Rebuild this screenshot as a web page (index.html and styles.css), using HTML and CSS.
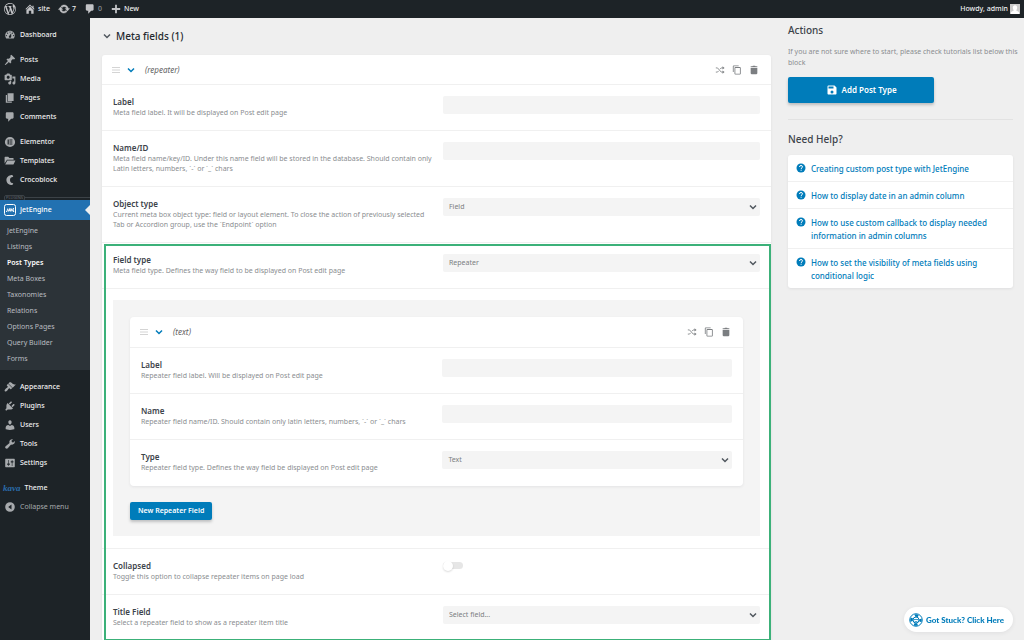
FILE: index.html
```html
<!DOCTYPE html>
<html lang="en">
<head>
<meta charset="utf-8">
<title>Edit Post Type</title>
<link rel="stylesheet" href="styles.css">
</head>
<body>
<svg class="sprite" aria-hidden="true">
  <symbol id="wp" viewBox="0 0 20 20"><path d="M20 10c0-5.51-4.49-10-10-10C4.48 0 0 4.49 0 10c0 5.52 4.48 10 10 10 5.51 0 10-4.48 10-10zM7.78 15.37L4.37 6.22c.55-.02 1.17-.08 1.17-.08.5-.06.44-1.13-.06-1.11 0 0-1.45.11-2.37.11-.18 0-.37 0-.58-.01C4.12 2.69 6.87 1.11 10 1.11c2.33 0 4.45.87 6.05 2.34-.68-.11-1.65.39-1.65 1.58 0 .74.45 1.36.9 2.1.35.61.55 1.36.55 2.46 0 1.49-1.4 5-1.4 5l-3.03-8.37c.54-.02.82-.17.82-.17.5-.05.44-1.25-.06-1.22 0 0-1.44.12-2.38.12-.87 0-2.33-.12-2.33-.12-.5-.03-.56 1.2-.06 1.22l.92.08 1.26 3.41zM17.41 10c.24-.64.74-1.87.43-4.25.7 1.29 1.05 2.71 1.05 4.25 0 3.29-1.73 6.24-4.4 7.78.97-2.59 1.94-5.2 2.92-7.78zM6.1 18.09C3.12 16.65 1.11 13.53 1.11 10c0-1.3.23-2.48.72-3.59C3.25 10.3 4.67 14.2 6.1 18.09zm4.03-6.63l2.58 6.98c-.86.29-1.76.45-2.71.45-.79 0-1.57-.11-2.29-.33.81-2.38 1.62-4.74 2.42-7.1z"/></symbol>
  <symbol id="home" viewBox="0 0 20 20"><path d="M16 8.5l1.53 1.53-1.06 1.06L10 4.6l-6.47 6.49-1.06-1.06L10 2.5l4 4v-2h2v4zm-6-2.46l6 5.99V18h-4v-5H8v5H4v-5.97z"/></symbol>
  <symbol id="update" viewBox="0 0 20 20"><path stroke="currentColor" stroke-width=".8" d="M10.2 3.28c3.53 0 6.43 2.61 6.92 6h2.08l-3.5 4-3.5-4h2.32c-.45-1.97-2.21-3.45-4.32-3.45-1.45 0-2.73.71-3.54 1.78L4.95 5.66C6.23 4.2 8.11 3.28 10.2 3.28zm-.4 13.44c-3.52 0-6.43-2.61-6.92-6H.8l3.5-4c1.17 1.33 2.33 2.67 3.5 4H5.48c.45 1.97 2.21 3.45 4.32 3.45 1.45 0 2.73-.71 3.54-1.78l1.71 1.95c-1.28 1.46-3.15 2.38-5.25 2.38z"/></symbol>
  <symbol id="plus" viewBox="0 0 20 20"><path d="M17 8.500v3h-5.500v5.500h-3v-5.500H3v-3h5.500V3h3v5.500z"/></symbol>
  <symbol id="dashboard" viewBox="0 0 20 20"><path fill-rule="evenodd" d="M3.76 16h12.48c1.1-1.37 1.76-3.11 1.76-5 0-4.42-3.58-8-8-8s-8 3.58-8 8c0 1.89.66 3.63 1.76 5zM10 4c.55 0 1 .45 1 1s-.45 1-1 1-1-.45-1-1 .45-1 1-1zM6 6c.55 0 1 .45 1 1s-.45 1-1 1-1-.45-1-1 .45-1 1-1zm8 0c.55 0 1 .45 1 1s-.45 1-1 1-1-.45-1-1 .45-1 1-1zm-5.37 5.550L12 7v6c0 1.100-.9 2-2 2s-2-.9-2-2c0-.57.24-1.080.63-1.450zM4 10c.55 0 1 .45 1 1s-.45 1-1 1-1-.45-1-1 .45-1 1-1zm12 0c.55 0 1 .45 1 1s-.45 1-1 1-1-.45-1-1 .45-1 1-1z"/></symbol>
  <symbol id="pin" viewBox="0 0 20 20"><path d="M10.44 3.02l1.82-1.82 6.36 6.35-1.83 1.82c-1.05-.68-2.48-.57-3.41.36l-.75.75c-.92.93-1.04 2.35-.35 3.41l-1.83 1.82-2.41-2.41-2.8 2.79c-.42.42-3.38 2.71-3.8 2.29s1.86-3.39 2.28-3.81l2.79-2.79L4.1 9.36l1.83-1.82c1.05.69 2.48.57 3.4-.36l.75-.75c.93-.92 1.05-2.35.36-3.41z"/></symbol>
  <symbol id="media" viewBox="0 0 20 20"><path d="M13 11V4c0-.55-.45-1-1-1h-1.670L9 1H5L3.670 3H2c-.55 0-1 .45-1 1v7c0 .55.45 1 1 1h10c.55 0 1-.45 1-1zM7 4.500c1.380 0 2.500 1.120 2.500 2.500S8.380 9.500 7 9.500 4.500 8.380 4.500 7 5.620 4.500 7 4.500zM14 6h5v10.500c0 1.380-1.120 2.500-2.500 2.500S14 17.880 14 16.500s1.120-2.500 2.500-2.500c.17 0 .34.02.5.05V9h-3V6zm-4 8.050V13h2v3.500c0 1.380-1.120 2.500-2.500 2.500S7 17.880 7 16.500 8.120 14 9.500 14c.17 0 .34.02.5.05z"/></symbol>
  <symbol id="page" viewBox="0 0 20 20"><path d="M6 15V2h10v13H6zm-1 1h8v2H3V5h2v11z"/></symbol>
  <symbol id="comment" viewBox="0 0 20 20"><path d="M5 2h9c1.100 0 2 .9 2 2v7c0 1.100-.9 2-2 2h-2l-5 5v-5H5c-1.100 0-2-.9-2-2V4c0-1.100.9-2 2-2z"/></symbol>
  <symbol id="elementor" viewBox="0 0 20 20"><path fill-rule="evenodd" d="M10 1.500a8.500 8.500 0 1 0 0 17 8.500 8.500 0 0 0 0-17zM6 6h2v8H6zM9 6h5v1.700H9zM9 9.150h5v1.700H9zM9 12.300h5V14H9z"/></symbol>
  <symbol id="folder" viewBox="0 0 20 20"><path d="M1 4q0-1 1-1h5l2 2h6q1 0 1 1v2H5L1 14zM5.500 9H19l-3 6.500q-.4.500-1 .500H2z"/></symbol>
  <symbol id="croco" viewBox="0 0 20 20"><path d="M14 1.500C8 1.500 4 5 4 10s4 8.500 10 8.500l1.500-3C11.500 15 10 13 10 10s1.500-5 5.500-5.500z"/></symbol>
  <symbol id="brush" viewBox="0 0 20 20"><path d="M14.480 11.060L7.410 3.990l1.500-1.500c.5-.56 2.300-.47 3.510.32 1.210.8 1.430 1.280 2.910 2.100 1.180.64 2.450 1.260 4.450.85zm-.71.71L6.700 4.700 4.930 6.470c-.39.39-.39 1.020 0 1.410l1.060 1.060c.39.39.39 1.030 0 1.420-.6.6-1.430 1.110-2.210 1.690-.35.26-.7.53-1.010.84C1.430 14.230.4 16.080 1.400 17.070c.99 1 2.840-.03 4.180-1.360.31-.31.58-.66.85-1.020.57-.78 1.080-1.610 1.690-2.210.39-.39 1.020-.39 1.410 0l1.060 1.060c.39.39 1.020.39 1.410 0z"/></symbol>
  <symbol id="plug" viewBox="0 0 20 20"><path d="M13.110 4.360L9.870 7.600 8 5.730l3.240-3.240c.35-.34 1.050-.2 1.560.32.52.51.66 1.210.31 1.550zm-8 1.770l.91-1.120 9.010 9.010-1.190.84c-.71.71-2.630 1.160-3.820 1.160H6.140L4.900 17.260c-.59.59-1.540.59-2.120 0-.59-.58-.59-1.530 0-2.120l1.240-1.240v-3.880c0-1.130.4-3.190 1.090-3.890zm7.260 3.970l3.240-3.240c.34-.35 1.040-.21 1.550.31.52.51.66 1.210.31 1.550l-3.240 3.250z"/></symbol>
  <symbol id="user" viewBox="0 0 20 20"><path d="M10 9.250c-2.270 0-2.730-3.440-2.730-3.440C7 4.020 7.820 2 9.970 2c2.160 0 2.980 2.020 2.710 3.810 0 0-.41 3.440-2.680 3.440zm0 2.570L12.720 10c2.390 0 4.520 2.330 4.520 4.530v2.490s-3.650 1.130-7.240 1.130c-3.650 0-7.240-1.130-7.240-1.130v-2.490c0-2.250 1.940-4.480 4.470-4.480z"/></symbol>
  <symbol id="wrench" viewBox="0 0 20 20"><path d="M16.680 9.770c-1.340 1.340-3.300 1.670-4.950.99l-5.410 6.520c-.99.99-2.590.99-3.580 0s-.99-2.590 0-3.570l6.520-5.420c-.68-1.650-.35-3.610.99-4.950 1.280-1.280 3.120-1.620 4.720-1.060l-2.890 2.890 2.820 2.820 2.860-2.870c.53 1.580.18 3.390-1.080 4.650z"/></symbol>
  <symbol id="sliders" viewBox="0 0 20 20"><path d="M18 16V4c0-.55-.45-1-1-1H3c-.55 0-1 .45-1 1v12c0 .55.45 1 1 1h14c.55 0 1-.45 1-1zM8 11h1c.55 0 1 .45 1 1s-.45 1-1 1H8v1.500c0 .28-.22.5-.5.5s-.5-.22-.5-.5V13H6c-.55 0-1-.45-1-1s.45-1 1-1h1V5.500c0-.28.22-.5.5-.5s.5.22.5.5V11zm5-2h-1c-.55 0-1-.45-1-1s.45-1 1-1h1V5.500c0-.28.22-.5.5-.5s.5.22.5.5V7h1c.55 0 1 .45 1 1s-.45 1-1 1h-1v5.500c0 .28-.22.5-.5.5s-.5-.22-.5-.5V9z"/></symbol>
  <symbol id="collapse" viewBox="0 0 20 20"><path fill-rule="evenodd" d="M10 2a8 8 0 1 0 0 16 8 8 0 0 0 0-16zM12.500 6v8L7 10z"/></symbol>
  <symbol id="chevron" viewBox="0 0 10 10"><path d="M2 3.500l3 3 3-3" fill="none" stroke="currentColor" stroke-width="1.500"/></symbol>
  <symbol id="drag" viewBox="0 0 10 10"><path d="M1 2.500h8M1 5h8M1 7.500h8" fill="none" stroke="currentColor"/></symbol>
  <symbol id="shuffle" viewBox="0 0 12 12"><path d="M1 3.500h2l4.500 5h2M1 8.500h2l1.400-1.500M6 5l1.500-1.500h2" fill="none" stroke="currentColor"/><path d="M9 1.500l2.500 2L9 5.500zM9 6.500l2.500 2-2.500 2z"/></symbol>
  <symbol id="copy" viewBox="0 0 24 24"><path d="M16 1H4c-1.100 0-2 .9-2 2v14h2V3h12zm3 4H8c-1.100 0-2 .9-2 2v14c0 1.100.9 2 2 2h11c1.100 0 2-.9 2-2V7c0-1.100-.9-2-2-2zm0 16H8V7h11z"/></symbol>
  <symbol id="trash" viewBox="0 0 24 24"><path d="M4 7h16v13q0 2-2 2H6q-2 0-2-2zM4 3h4l1.500-1.500h5L16 3h4v2.500H4z"/></symbol>
  <symbol id="save" viewBox="0 0 24 24"><path fill-rule="evenodd" d="M17 3H5a2 2 0 0 0-2 2v14c0 1.100.9 2 2 2h14c1.100 0 2-.9 2-2V7zm-5 16a3 3 0 1 1 0-6 3 3 0 0 1 0 6zm3-10H5V5h10z"/></symbol>
  <symbol id="help" viewBox="0 0 20 20"><circle cx="10" cy="10" r="9"/><path d="M7 8q0-3 3-3t3 2.700c0 2-2.800 2-2.800 4.200M10.200 13.500v2" fill="none" stroke="#fff" stroke-width="2"/></symbol>
</svg>

<header class="bar">
  <a class="bar-item" href="#" aria-label="About WordPress"><svg class="ico"><use href="#wp"/></svg></a>
  <a class="bar-item" href="#"><svg class="ico"><use href="#home"/></svg>site</a>
  <a class="bar-item" href="#"><svg class="ico"><use href="#update"/></svg>7</a>
  <a class="bar-item bar-item-muted" href="#"><svg class="ico"><use href="#comment"/></svg>0</a>
  <a class="bar-item" href="#"><svg class="ico"><use href="#plus"/></svg>New</a>
  <a class="bar-item bar-user" href="#">Howdy, admin <svg class="avatar" viewBox="0 0 10 10"><path fill="#ccc" d="M0 0h10v10H0z"/><path fill="#fff" d="M5 1.200c1.500 0 2.200 1 2.200 2.400S6.300 6.400 6.200 6.600L9 8v2H1V8l2.800-1.400C3.700 6.400 2.800 5 2.800 3.600S3.500 1.200 5 1.200z"/></svg></a>
</header>

<div class="layout">
  <nav class="side" aria-label="Admin menu">
    <ul class="menu">
      <li><a class="item" href="#"><svg class="ico"><use href="#dashboard"/></svg>Dashboard</a></li>
    </ul>
    <ul class="menu">
      <li><a class="item" href="#"><svg class="ico"><use href="#pin"/></svg>Posts</a></li>
      <li><a class="item" href="#"><svg class="ico"><use href="#media"/></svg>Media</a></li>
      <li><a class="item" href="#"><svg class="ico"><use href="#page"/></svg>Pages</a></li>
      <li><a class="item" href="#"><svg class="ico"><use href="#comment"/></svg>Comments</a></li>
    </ul>
    <ul class="menu">
      <li><a class="item" href="#"><svg class="ico"><use href="#elementor"/></svg>Elementor</a></li>
      <li><a class="item" href="#"><svg class="ico"><use href="#folder"/></svg>Templates</a></li>
      <li><a class="item" href="#"><svg class="ico"><use href="#croco"/></svg>Crocoblock</a></li>
    </ul>
    <div class="divider"><span class="divider-label">PLUGINS</span></div>
    <a class="item item-active" href="#"><svg class="ico" viewBox="0 0 12 12"><rect x=".5" y=".5" width="11" height="11" rx="2" fill="none" stroke="currentColor"/><path d="M2 7.500h1l.7-3M4.500 7.500l1.200-3 .5 3M7 7.500v-3l1 1.500M10 4.500H9v3h1.200M4 6.200h6" fill="none" stroke="currentColor" stroke-width=".9"/></svg>JetEngine</a>
    <ul class="submenu">
      <li><a class="sub" href="#">JetEngine</a></li>
      <li><a class="sub" href="#">Listings</a></li>
      <li><a class="sub sub-current" href="#">Post Types</a></li>
      <li><a class="sub" href="#">Meta Boxes</a></li>
      <li><a class="sub" href="#">Taxonomies</a></li>
      <li><a class="sub" href="#">Relations</a></li>
      <li><a class="sub" href="#">Options Pages</a></li>
      <li><a class="sub" href="#">Query Builder</a></li>
      <li><a class="sub" href="#">Forms</a></li>
    </ul>
    <ul class="menu">
      <li><a class="item" href="#"><svg class="ico"><use href="#brush"/></svg>Appearance</a></li>
      <li><a class="item" href="#"><svg class="ico"><use href="#plug"/></svg>Plugins</a></li>
      <li><a class="item" href="#"><svg class="ico"><use href="#user"/></svg>Users</a></li>
      <li><a class="item" href="#"><svg class="ico"><use href="#wrench"/></svg>Tools</a></li>
      <li><a class="item" href="#"><svg class="ico"><use href="#sliders"/></svg>Settings</a></li>
    </ul>
    <ul class="menu">
      <li><a class="item item-theme" href="#"><span class="kava">kava</span>Theme</a></li>
      <li><button class="item item-muted" type="button"><svg class="ico"><use href="#collapse"/></svg>Collapse menu</button></li>
    </ul>
  </nav>

  <main class="main">
    <h2 class="title"><svg class="chev"><use href="#chevron"/></svg>Meta fields (1)</h2>
    <div class="card">
      <div class="card-head">
        <svg class="chev drag"><use href="#drag"/></svg><svg class="chev chev-blue"><use href="#chevron"/></svg>
        <em class="card-name">(repeater)</em>
        <button class="tool" type="button" aria-label="Shuffle"><svg class="tool-ico"><use href="#shuffle"/></svg></button>
        <button class="tool" type="button" aria-label="Duplicate"><svg class="tool-ico"><use href="#copy"/></svg></button>
        <button class="tool" type="button" aria-label="Delete"><svg class="tool-ico"><use href="#trash"/></svg></button>
      </div>
      <div class="row">
        <div class="info"><label class="label" for="f-label">Label</label><p class="desc">Meta field label. It will be displayed on Post edit page</p></div>
        <input class="control" id="f-label" type="text">
      </div>
      <div class="row">
        <div class="info"><label class="label" for="f-name">Name/ID</label><p class="desc">Meta field name/key/ID. Under this name field will be stored in the database. Should contain only Latin letters, numbers, `-` or `_` chars</p></div>
        <input class="control" id="f-name" type="text">
      </div>
      <div class="row">
        <div class="info"><label class="label" for="f-object">Object type</label><p class="desc">Current meta box object type: field or layout element. To close the action of previously selected Tab or Accordion group, use the `Endpoint` option</p></div>
        <div class="select"><select class="control" id="f-object"><option>Field</option></select><svg class="chev"><use href="#chevron"/></svg></div>
      </div>
      <section class="marked">
        <div class="row">
          <div class="info"><label class="label" for="f-type">Field type</label><p class="desc">Meta field type. Defines the way field to be displayed on Post edit page</p></div>
          <div class="select"><select class="control" id="f-type"><option>Repeater</option></select><svg class="chev"><use href="#chevron"/></svg></div>
        </div>
        <div class="row row-wide">
          <div class="nest">
            <div class="card card-nested">
              <div class="card-head">
                <svg class="chev drag"><use href="#drag"/></svg><svg class="chev chev-blue"><use href="#chevron"/></svg>
                <em class="card-name">(text)</em>
                <button class="tool" type="button" aria-label="Shuffle"><svg class="tool-ico"><use href="#shuffle"/></svg></button>
                <button class="tool" type="button" aria-label="Duplicate"><svg class="tool-ico"><use href="#copy"/></svg></button>
                <button class="tool" type="button" aria-label="Delete"><svg class="tool-ico"><use href="#trash"/></svg></button>
              </div>
              <div class="row">
                <div class="info"><label class="label" for="r-label">Label</label><p class="desc">Repeater field label. Will be displayed on Post edit page</p></div>
                <input class="control" id="r-label" type="text">
              </div>
              <div class="row">
                <div class="info"><label class="label" for="r-name">Name</label><p class="desc">Repeater field name/ID. Should contain only latin letters, numbers, `-` or `_` chars</p></div>
                <input class="control" id="r-name" type="text">
              </div>
              <div class="row">
                <div class="info"><label class="label" for="r-type">Type</label><p class="desc">Repeater field type. Defines the way field be displayed on Post edit page</p></div>
                <div class="select"><select class="control" id="r-type"><option>Text</option></select><svg class="chev"><use href="#chevron"/></svg></div>
              </div>
            </div>
            <button class="btn" type="button">New Repeater Field</button>
          </div>
        </div>
        <div class="row">
          <div class="info"><label class="label" for="f-collapsed">Collapsed</label><p class="desc">Toggle this option to collapse repeater items on page load</p></div>
          <input class="switch" id="f-collapsed" type="checkbox" role="switch">
        </div>
        <div class="row">
          <div class="info"><label class="label" for="f-title">Title Field</label><p class="desc">Select a repeater field to show as a repeater item title</p></div>
          <div class="select"><select class="control" id="f-title"><option>Select field...</option></select><svg class="chev"><use href="#chevron"/></svg></div>
        </div>
      </section>
    </div>
  </main>

  <aside class="aside">
    <h2 class="heading">Actions</h2>
    <p class="note">If you are not sure where to start, please check tutorials list below this block</p>
    <button class="btn btn-large" type="button"><svg class="ico"><use href="#save"/></svg>Add Post Type</button>
    <hr class="rule">
    <h2 class="heading">Need Help?</h2>
    <ul class="help">
      <li><a class="help-link" href="#"><svg class="help-ico"><use href="#help"/></svg>Creating custom post type with JetEngine</a></li>
      <li><a class="help-link" href="#"><svg class="help-ico"><use href="#help"/></svg>How to display date in an admin column</a></li>
      <li><a class="help-link" href="#"><svg class="help-ico"><use href="#help"/></svg>How to use custom callback to display needed information in admin columns</a></li>
      <li><a class="help-link" href="#"><svg class="help-ico"><use href="#help"/></svg>How to set the visibility of meta fields using conditional logic</a></li>
    </ul>
  </aside>
</div>

<button class="stuck" type="button"><svg class="ring" viewBox="0 0 28 28"><g fill="none" stroke="currentColor"><circle cx="14" cy="14" r="12.500" stroke-width="2"/><circle cx="14" cy="14" r="9" stroke-width="5" stroke-dasharray="7 7.137" stroke-dashoffset="3.500"/><circle cx="14" cy="14" r="6" stroke-width="2"/><path d="M9.500 13h9M11 16.500q3 2 6 0" stroke-width="1.500"/></g></svg>Got Stuck? Click Here</button>
</body>
</html>
```
FILE: styles.css
```css
* { box-sizing: border-box; }
body {
  margin: 0;
  min-height: 100vh;
  display: flex;
  flex-direction: column;
  background: #efefef;
  color: #3c434a;
  font: 7px/10px "Noto Sans", "Open Sans", sans-serif;
}
h2, p, ul { margin: 0; padding: 0; }
ul { list-style: none; }
a { color: inherit; text-decoration: none; }
button, input, select { font: inherit; color: inherit; border: 0; margin: 0; padding: 0; background: none; }
button { cursor: pointer; }
svg { fill: currentColor; flex: none; display: block; }
.sprite { position: absolute; width: 0; height: 0; }
.ico { width: 12px; height: 12px; }

.bar {
  display: flex;
  align-items: center;
  gap: 8px;
  height: 18px;
  padding: 0 4px;
  background: #1d2327;
  color: #f0f0f1;
  font-weight: 500;
}
.bar-item { display: flex; align-items: center; gap: 2px; }
.bar-item .ico { color: #c3c4c7; }
.bar-item-muted { color: #8c9196; }
.bar-user { margin-left: auto; }
.avatar { width: 10px; height: 10px; }

.layout { display: flex; flex: 1; }
.side {
  flex: none;
  width: 90px;
  padding-top: 7px;
  background: #1d2327;
  color: #f0f0f1;
}
.menu { margin-bottom: 6px; }
.item {
  display: flex;
  align-items: center;
  gap: 4px;
  width: 100%;
  height: 19px;
  padding: 0 4px;
  font-weight: 500;
  white-space: nowrap;
}
.item .ico { color: #a7aaad; }
.item-muted { color: #a7aaad; font-weight: 400; }
.divider { display: flex; align-items: center; height: 5px; }
.divider::after { content: ""; flex: 1; height: 1px; background: #3c4247; }
.divider-label {
  margin-left: 4px;
  padding: 0 1px;
  border: 1px solid #3c4247;
  border-radius: 2px;
  color: #646970;
  font-size: 4px;
  line-height: 4px;
}
.item-active { position: relative; height: 20px; background: #2271b1; color: #fff; }
.item-active .ico { color: #fff; }
.item-active::after {
  content: "";
  position: absolute;
  right: 0;
  top: 5px;
  border: 5px solid transparent;
  border-right-color: #efefef;
  border-left: 0;
}
.submenu { padding: 3px 0; margin-bottom: 7px; background: #2c3338; }
.sub { display: block; padding: 0 7px; line-height: 16px; color: #b9bdc1; }
.sub-current { color: #fff; font-weight: 600; }
.item-theme { padding-left: 3px; }
.kava { color: #2a6cab; font: italic bold 9px/10px "Liberation Serif", serif; }

.main { flex: 1; min-width: 0; padding-left: 12px; }
.title {
  display: flex;
  align-items: center;
  gap: 4px;
  height: 37px;
  padding-bottom: 2px;
  font-size: 10px;
  font-weight: 500;
  color: #23282d;
}
.title .chev { color: #50575e; }
.chev { width: 10px; height: 10px; }
.chev-blue { color: #007cba; }
.drag { color: #d4d4d4; }
.card { background: #fff; border-radius: 3px; box-shadow: 0 1px 3px rgba(35, 40, 45, .08); }
.card-head {
  display: flex;
  align-items: center;
  gap: 5px;
  height: 30px;
  padding: 0 11px 0 9px;
  border-bottom: 1px solid #f0f0f0;
}
.card-nested { border-radius: 4px; }
.card-nested .card-head { height: 31px; }
.card-name { flex: 1; padding-left: 4px; font-size: 8px; color: #646464; }
.tool { color: #7b7e81; padding: 0 1px; }
.tool-ico { width: 10px; height: 10px; }
.row {
  display: grid;
  grid-template-columns: 51% 49%;
  align-items: start;
  padding: 11px 11px 12px;
  border-bottom: 1px solid #f0f0f0;
}
.row:last-child { border-bottom-color: transparent; }
.row-wide { grid-template-columns: 100%; }
.info { padding-right: 8px; }
.label { display: block; font-size: 8px; line-height: 12px; font-weight: 600; }
.desc { color: #8a8d90; }
.control {
  width: 100%;
  height: 18px;
  padding: 0 6px;
  border-radius: 2px;
  background: #f4f4f4;
  color: #7b7e81;
  appearance: none;
}
.select { display: grid; align-items: center; }
.select > * { grid-area: 1 / 1; }
.select .chev { justify-self: end; margin-right: 2px; color: #50575e; pointer-events: none; }
.marked { position: relative; }
.marked::after {
  content: "";
  position: absolute;
  inset: 1px 0 0 2px;
  border: 2px solid #3cb179;
  pointer-events: none;
}
.nest { padding: 17px 17px 16px; background: #f4f4f4; }
.switch {
  appearance: none;
  display: flex;
  align-items: center;
  width: 20px;
  height: 7px;
  margin-top: 2px;
  border-radius: 4px;
  background: #e6e6e6;
}
.switch::before {
  content: "";
  width: 10px;
  height: 10px;
  border-radius: 50%;
  background: #fff;
  box-shadow: 0 1px 2px rgba(0, 0, 0, .15);
}
.btn {
  display: flex;
  align-items: center;
  justify-content: center;
  gap: 4px;
  height: 18px;
  padding: 0 8px;
  border-radius: 2px;
  background: #007cba;
  color: #fff;
  font-weight: 600;
  box-shadow: 0 2px 3px rgba(35, 40, 45, .25);
}
.card-nested + .btn { margin-top: 16px; }
.btn-large { width: 65%; height: 26px; font-size: 8px; }

.aside { flex: none; width: 242px; padding: 5px 0 0 17px; margin-right: 11px; }
.heading { font-size: 10px; line-height: 14px; font-weight: 500; color: #3c434a; }
.note { margin: 9px -10px 9px 0; line-height: 11px; color: #8a8d90; }
.rule { margin: 16px 0 12px; border: 0; border-top: 1px solid #e2e2e2; }
.help { margin-top: 9px; background: #fff; border-radius: 3px; box-shadow: 0 1px 3px rgba(35, 40, 45, .08); }
.help li + li { border-top: 1px solid #f0f0f0; }
.help-link {
  display: flex;
  gap: 5px;
  padding: 7px 16px 6px 8px;
  color: #007cba;
  font-size: 8px;
  line-height: 13px;
  font-weight: 500;
}
.help-ico { width: 10px; height: 10px; margin-top: 1px; }
.stuck {
  position: fixed;
  right: 11px;
  bottom: 8px;
  display: flex;
  align-items: center;
  gap: 3px;
  height: 25px;
  padding: 0 9px 0 5px;
  border-radius: 13px;
  background: #fff;
  color: #007cba;
  font: 900 8px/12px Lato, sans-serif;
  box-shadow: 0 1px 4px rgba(35, 40, 45, .08);
}
.ring { width: 14px; height: 14px; }
```
